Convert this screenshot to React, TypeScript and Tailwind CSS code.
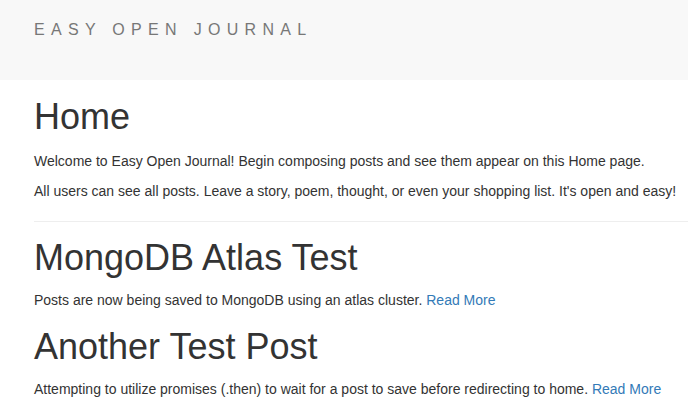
import React from "react";

const posts = [
  {
    title: "MongoDB Atlas Test",
    body: "Posts are now being saved to MongoDB using an atlas cluster.",
  },
  {
    title: "Another Test Post",
    body: "Attempting to utilize promises (.then) to wait for a post to save before redirecting to home.",
  },
];

function Navbar() {
  return (
    <div className="h-20 bg-[#f8f8f8] pl-[34px] pt-5">
      <p className="text-[16px] leading-5 tracking-[6.3px] text-[#777]">
        EASY OPEN JOURNAL
      </p>
    </div>
  );
}

function App() {
  return (
    <div className="min-h-screen bg-white font-['Liberation_Sans',Arial,sans-serif] text-[#333]">
      <Navbar />
      <div className="pl-[34px]">
        <h1 className="mt-[17px] mb-[14px] text-[36px] leading-10">Home</h1>
        <p className="text-[14px] leading-5 mb-[10px]">
          Welcome to Easy Open Journal! Begin composing posts and see them appear
          on this Home page.
        </p>
        <p className="text-[14px] leading-5 whitespace-nowrap">
          All users can see all posts. Leave a story, poem, thought, or even your
          shopping list. It's open and easy!
        </p>
        <div className="mt-5 border-t border-[#eee]"></div>

        {posts.map((post, i) => (
          <div key={post.title} className={i === 0 ? "mt-4" : "mt-[17px]"}>
            <h1 className="mb-3 text-[36px] leading-10">{post.title}</h1>
            <p className="text-[14px] leading-5 whitespace-nowrap">
              {post.body}{" "}
              <a href="#" className="text-[#337ab7]">
                Read More
              </a>
            </p>
          </div>
        ))}
      </div>
    </div>
  );
}

export default App;
